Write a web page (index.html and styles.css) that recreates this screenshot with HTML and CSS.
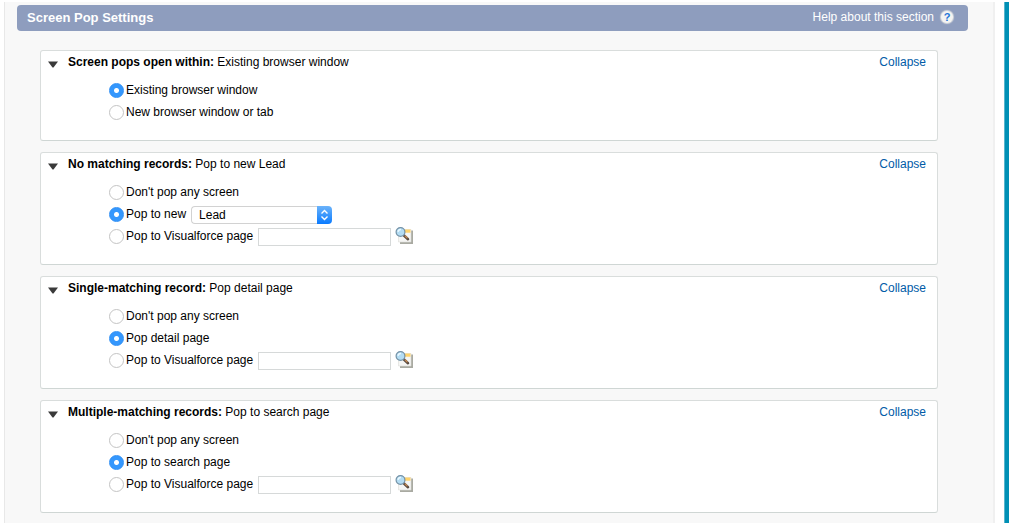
FILE: index.html
```html
<!DOCTYPE html>
<html lang="en">
<head>
    <meta charset="UTF-8">
    <meta name="viewport" content="width=device-width, initial-scale=1.0">
    <title>Screen Pop Settings</title>
    <link rel="stylesheet" href="styles.css">
</head>
<body>
    <!-- shared icons -->
    <svg class="sprite" aria-hidden="true">
        <symbol id="icon-arrow" viewBox="0 0 10 7">
            <path d="M0 .5h10L5.500 6.500h-1z" fill="#3a3a3a"/>
        </symbol>
        <symbol id="icon-lookup" viewBox="0 0 18 17">
            <path d="M5 3.500h13V17H5z" fill="#a9aaa2"/>
            <path d="M3.500 2.500h12.500v12.500H3.500z" fill="#f6f6f4" stroke="#dcdcd6" stroke-width=".6"/>
            <path d="M9 2.500h6.500v3.200H9z" fill="#ffd36b"/>
            <path d="M9 8.500l4 3.700" stroke="#5a4a40" stroke-width="2.600" stroke-linecap="round"/>
            <path d="M10.200 9l1.800 1.700" stroke="#c48a54" stroke-width="1.300" stroke-linecap="round"/>
            <circle cx="5.500" cy="5" r="4.400" fill="#b3dcf3" stroke="#7391a6" stroke-width="1.200"/>
            <path d="M3 4.800a2.800 2.800 0 0 1 3-2.300" fill="none" stroke="#e9f8ff" stroke-width="1.400"/>
        </symbol>
    </svg>

    <main class="page">
        <header class="section-bar">
            <h1>Screen Pop Settings</h1>
            <a class="help" href="#">Help about this section <span class="help-icon">?</span></a>
        </header>

        <div class="cards">
            <section class="card">
                <div class="card-head">
                    <svg class="arrow"><use href="#icon-arrow"/></svg>
                    <h2>Screen pops open within: <span>Existing browser window</span></h2>
                    <a class="collapse" href="#">Collapse</a>
                </div>
                <div class="options">
                    <div class="option">
                        <input type="radio" id="win-existing" name="window" checked>
                        <label for="win-existing">Existing browser window</label>
                    </div>
                    <div class="option">
                        <input type="radio" id="win-new" name="window">
                        <label for="win-new">New browser window or tab</label>
                    </div>
                </div>
            </section>

            <section class="card">
                <div class="card-head">
                    <svg class="arrow"><use href="#icon-arrow"/></svg>
                    <h2>No matching records: <span>Pop to new Lead</span></h2>
                    <a class="collapse" href="#">Collapse</a>
                </div>
                <div class="options">
                    <div class="option">
                        <input type="radio" id="none-nopop" name="none">
                        <label for="none-nopop">Don't pop any screen</label>
                    </div>
                    <div class="option">
                        <input type="radio" id="none-new" name="none" checked>
                        <label for="none-new">Pop to new</label>
                        <div class="select">
                            <select aria-label="New record type">
                                <option>Lead</option>
                            </select>
                            <svg class="stepper" viewBox="0 0 15 18" aria-hidden="true">
                                <path d="M4.500 7.500l3-3 3 3M4.500 10.500l3 3 3-3" fill="none" stroke="#fff" stroke-width="1.400"/>
                            </svg>
                        </div>
                    </div>
                    <div class="option">
                        <input type="radio" id="none-vf" name="none">
                        <label for="none-vf">Pop to Visualforce page</label>
                        <input type="text" class="lookup" aria-label="Visualforce page">
                        <button type="button" class="lookup-btn" aria-label="Lookup"><svg><use href="#icon-lookup"/></svg></button>
                    </div>
                </div>
            </section>

            <section class="card">
                <div class="card-head">
                    <svg class="arrow"><use href="#icon-arrow"/></svg>
                    <h2>Single-matching record: <span>Pop detail page</span></h2>
                    <a class="collapse" href="#">Collapse</a>
                </div>
                <div class="options">
                    <div class="option">
                        <input type="radio" id="single-nopop" name="single">
                        <label for="single-nopop">Don't pop any screen</label>
                    </div>
                    <div class="option">
                        <input type="radio" id="single-detail" name="single" checked>
                        <label for="single-detail">Pop detail page</label>
                    </div>
                    <div class="option">
                        <input type="radio" id="single-vf" name="single">
                        <label for="single-vf">Pop to Visualforce page</label>
                        <input type="text" class="lookup" aria-label="Visualforce page">
                        <button type="button" class="lookup-btn" aria-label="Lookup"><svg><use href="#icon-lookup"/></svg></button>
                    </div>
                </div>
            </section>

            <section class="card">
                <div class="card-head">
                    <svg class="arrow"><use href="#icon-arrow"/></svg>
                    <h2>Multiple-matching records: <span>Pop to search page</span></h2>
                    <a class="collapse" href="#">Collapse</a>
                </div>
                <div class="options">
                    <div class="option">
                        <input type="radio" id="multi-nopop" name="multi">
                        <label for="multi-nopop">Don't pop any screen</label>
                    </div>
                    <div class="option">
                        <input type="radio" id="multi-search" name="multi" checked>
                        <label for="multi-search">Pop to search page</label>
                    </div>
                    <div class="option">
                        <input type="radio" id="multi-vf" name="multi">
                        <label for="multi-vf">Pop to Visualforce page</label>
                        <input type="text" class="lookup" aria-label="Visualforce page">
                        <button type="button" class="lookup-btn" aria-label="Lookup"><svg><use href="#icon-lookup"/></svg></button>
                    </div>
                </div>
            </section>
        </div>
    </main>
    <div class="edge"></div>
</body>
</html>
```

FILE: styles.css
```css
* {
    box-sizing: border-box;
}
body {
    margin: 0;
    padding: 2px 0 0 4px;
    min-height: 100vh;
    display: flex;
    background: #fff;
    color: #000;
    font-family: "Liberation Sans", Arial, sans-serif;
    font-size: 12px;
}
a {
    text-decoration: none;
}
.sprite {
    position: absolute;
    width: 0;
    height: 0;
}
.page {
    flex: 1;
    padding: 3px 25px 10px 12px;
    background: #f8f8f8;
    border-left: 1px solid #e8e8e8;
    border-right: 2px solid #f0f0f0;
}
.edge {
    width: 5px;
    margin-left: 9px;
    background: #0090b5;
    border-left: 1px solid #58b4cc;
}

/* section title bar */
.section-bar {
    display: flex;
    align-items: center;
    justify-content: space-between;
    height: 26px;
    padding: 0 15px 2px 10px;
    background: #8e9dbe;
    border-radius: 4px;
    color: #fff;
}
.section-bar h1 {
    margin: 0;
    font-size: 13px;
}
.help {
    display: flex;
    align-items: center;
    gap: 7px;
    color: #fff;
}
.help-icon {
    width: 12px;
    height: 12px;
    border-radius: 50%;
    background: #f4f4f2;
    box-shadow: 0 0 1px 1px #d5d8dd;
    color: #1f74d8;
    font-size: 11px;
    font-weight: bold;
    line-height: 12px;
    text-align: center;
}

/* cards */
.cards {
    display: flex;
    flex-direction: column;
    gap: 11px;
    padding: 19px 30px 0 23px;
}
.card {
    padding-bottom: 17px;
    background: #fff;
    border: 1px solid #d9dddc;
    border-bottom-color: #cfd6d4;
    border-radius: 3px;
}
.card-head {
    display: flex;
    align-items: center;
    height: 22px;
    margin-bottom: 6px;
    padding: 0 11px 0 7px;
}
.arrow {
    width: 10px;
    height: 7px;
    margin: 4px 10px 0 0;
}
.card-head h2 {
    flex: 1;
    margin: 0;
    font-size: 12px;
}
.card-head h2 span {
    font-weight: normal;
}
.collapse {
    color: #015ba7;
}
.options {
    padding-left: 68px;
}
.option {
    display: flex;
    align-items: center;
    height: 22px;
}

/* form controls */
input[type="radio"] {
    appearance: none;
    width: 15px;
    height: 15px;
    margin: 0 2px 0 0;
    border: 1px solid #c4c4c4;
    border-radius: 50%;
    background: #fff;
}
input[type="radio"]:checked {
    border-color: #2f8ff5;
    background: radial-gradient(circle, #fff 2px, #3497fd 3px);
}
.select {
    display: flex;
    height: 18px;
    margin: 2px 0 0 5px;
}
.select select {
    appearance: none;
    width: 126px;
    padding: 0 7px;
    border: 1px solid #d2d2d2;
    border-right: 0;
    border-radius: 4px 0 0 4px;
    background: #fff;
    color: #000;
    font: inherit;
}
.stepper {
    width: 15px;
    height: 18px;
    border-radius: 0 4px 4px 0;
    background: linear-gradient(#6bb3fa, #0a7bff);
}
.lookup {
    width: 133px;
    height: 18px;
    margin: 2px 4px 0 5px;
    padding: 0 4px;
    border: 1px solid #d6d9d9;
    background: #fff;
    font: inherit;
}
.lookup-btn {
    display: flex;
    margin-bottom: 2px;
    padding: 0;
    border: 0;
    background: none;
}
.lookup-btn svg {
    width: 18px;
    height: 17px;
}
```
